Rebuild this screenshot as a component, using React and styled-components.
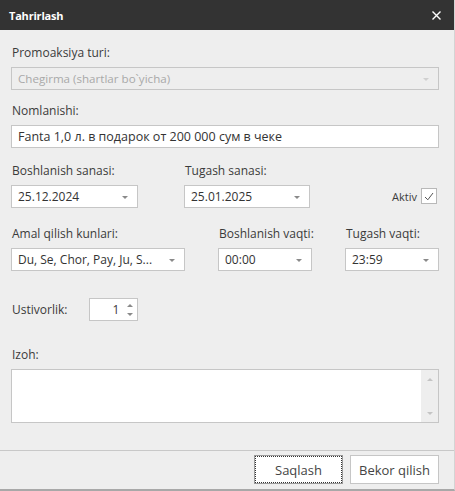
import React from "react";
import styled, { createGlobalStyle } from "styled-components";

const GlobalStyle = createGlobalStyle`
  html, body {
    margin: 0;
    padding: 0;
    background: #eeeeee;
  }
  * {
    box-sizing: border-box;
  }
`;

const Window = styled.div`
  width: 455px;
  height: 491px;
  display: flex;
  flex-direction: column;
  background: #eeeeee;
  font-family: "Open Sans", "Noto Sans", sans-serif;
  font-size: 12px;
  color: #3b3b3b;
  border-right: 1px solid #d4d4d4;
  border-bottom: 2px solid #a8a8a8;
`;

const TitleBar = styled.div`
  height: 30px;
  flex-shrink: 0;
  background: #333333;
  color: #ffffff;
  display: flex;
  align-items: center;
  justify-content: space-between;
  padding: 0 13px 0 9px;
`;

const Title = styled.span`
  font-weight: 700;
  font-size: 11px;
  letter-spacing: -0.2px;
`;

const Body = styled.div`
  flex: 1;
  display: flex;
  flex-direction: column;
  padding: 0 15px 0 11px;
`;

const Group = styled.div`
  display: flex;
  flex-direction: column;
  gap: 6px;
  margin-top: ${(p) => p.top}px;
  width: ${(p) => (p.w ? `${p.w}px` : "auto")};
`;

const Row = styled.div`
  display: flex;
  align-items: ${(p) => p.align || "flex-start"};
  gap: ${(p) => p.gap || 0}px;
  margin-top: ${(p) => p.top || 0}px;
`;

const Label = styled.label`
  line-height: 17px;
  height: 17px;
  white-space: nowrap;
  padding-left: 1px;
`;

const Box = styled.div`
  height: 23px;
  background: ${(p) => (p.disabled ? "#eeeeee" : "#ffffff")};
  border: 1px solid #c6c6c6;
  display: flex;
  align-items: center;
  padding: 0 9px 0 6px;
  color: ${(p) => (p.disabled ? "#a9a9a9" : "#333333")};
  white-space: nowrap;
  overflow: hidden;
`;

const BoxText = styled.span`
  flex: 1;
  overflow: hidden;
  font-size: ${(p) => p.size || 12}px;
`;

const Arrow = styled.span`
  width: 0;
  height: 0;
  border-left: 3.5px solid transparent;
  border-right: 3.5px solid transparent;
  border-top: 3px solid ${(p) => (p.disabled ? "#d0d0d0" : "#8a8a8a")};
  border-bottom: none;
  margin-left: 4px;
  margin-top: 2px;
`;

const UpArrow = styled.span`
  width: 0;
  height: 0;
  border-left: 3.5px solid transparent;
  border-right: 3.5px solid transparent;
  border-bottom: 3px solid ${(p) => p.color || "#8a8a8a"};
`;

const DownArrow = styled.span`
  width: 0;
  height: 0;
  border-left: 3.5px solid transparent;
  border-right: 3.5px solid transparent;
  border-top: 3px solid ${(p) => p.color || "#8a8a8a"};
`;

const Combo = ({ value, disabled }) => (
  <Box disabled={disabled}>
    <BoxText size={disabled ? 11.6 : 12}>{value}</BoxText>
    <Arrow disabled={disabled} />
  </Box>
);

const CheckWrap = styled.div`
  display: flex;
  align-items: center;
  gap: 4px;
  margin-left: auto;
  margin-right: 2px;
  margin-bottom: 4px;
  font-size: 11px;
`;

const CheckBox = styled.span`
  width: 16px;
  height: 16px;
  border: 1px solid #b8b8b8;
  background: #ffffff;
  display: flex;
  align-items: center;
  justify-content: center;
`;

const Spinner = styled.div`
  width: 49px;
  height: 23px;
  background: #ffffff;
  border: 1px solid #c6c6c6;
  display: flex;
  align-items: center;
  justify-content: flex-end;
  padding-right: 4px;
  gap: 8px;
`;

const SpinButtons = styled.div`
  display: flex;
  flex-direction: column;
  align-items: center;
  gap: 6px;
`;

const TextArea = styled.div`
  height: 54px;
  background: #ffffff;
  border: 1px solid #c6c6c6;
  display: flex;
  justify-content: flex-end;
`;

const ScrollBar = styled.div`
  width: 17px;
  background: #eeeeee;
  display: flex;
  flex-direction: column;
  justify-content: space-between;
  align-items: center;
  padding: 8px 0 7px;
`;

const Footer = styled.div`
  margin-top: auto;
  border-top: 1px solid #c8c8c8;
  display: flex;
  justify-content: flex-end;
  gap: 7px;
  padding: 4px 15px 5px 0;
`;

const Button = styled.button`
  width: 89px;
  height: 29px;
  background: #ffffff;
  border: 1px solid ${(p) => (p.focused ? "#9a9a9a" : "#c6c6c6")};
  font-family: inherit;
  font-size: 13px;
  color: #444444;
  padding: 0;
  outline: ${(p) => (p.focused ? "1px dotted #333333" : "none")};
  outline-offset: -2px;
`;

export default function App() {
  return (
    <>
      <GlobalStyle />
      <Window>
        <TitleBar>
          <Title>Tahrirlash</Title>
          <svg width="9" height="9" viewBox="0 0 9 9">
            <path d="M0.5 0.5 L8.5 8.5 M8.5 0.5 L0.5 8.5" stroke="#ffffff" strokeWidth="1.4" />
          </svg>
        </TitleBar>
        <Body>
          <Group top={14}>
            <Label>Promoaksiya turi:</Label>
            <Combo disabled value="Chegirma (shartlar bo`yicha)" />
          </Group>

          <Group top={12}>
            <Label>Nomlanishi:</Label>
            <Box>
              <BoxText size={12.5}>Fanta 1,0 л. в подарок от 200 000 сум в чеке</BoxText>
            </Box>
          </Group>

          <Row top={14} gap={46} align="flex-end">
            <Group w={127}>
              <Label>Boshlanish sanasi:</Label>
              <Combo value="25.12.2024" />
            </Group>
            <Group w={126}>
              <Label>Tugash sanasi:</Label>
              <Combo value="25.01.2025" />
            </Group>
            <CheckWrap>
              <span>Aktiv</span>
              <CheckBox>
                <svg width="10" height="9" viewBox="0 0 10 9">
                  <path d="M1 5 L3.8 7.8 L9 1" stroke="#555555" strokeWidth="1" fill="none" />
                </svg>
              </CheckBox>
            </CheckWrap>
          </Row>

          <Row top={17} gap={33}>
            <Group w={174}>
              <Label>Amal qilish kunlari:</Label>
              <Combo value="Du, Se, Chor, Pay, Ju, S..." />
            </Group>
            <Group w={94}>
              <Label>Boshlanish vaqti:</Label>
              <Combo value="00:00" />
            </Group>
            <Group w={94}>
              <Label>Tugash vaqti:</Label>
              <Combo value="23:59" />
            </Group>
          </Row>

          <Row top={27} gap={22} align="center">
            <Label>Ustivorlik:</Label>
            <Spinner>
              <span>1</span>
              <SpinButtons>
                <UpArrow />
                <DownArrow />
              </SpinButtons>
            </Spinner>
          </Row>

          <Group top={25}>
            <Label>Izoh:</Label>
            <TextArea>
              <ScrollBar>
                <UpArrow color="#c4c4c4" />
                <DownArrow color="#c4c4c4" />
              </ScrollBar>
            </TextArea>
          </Group>
        </Body>
        <Footer>
          <Button focused>Saqlash</Button>
          <Button>Bekor qilish</Button>
        </Footer>
      </Window>
    </>
  );
}
